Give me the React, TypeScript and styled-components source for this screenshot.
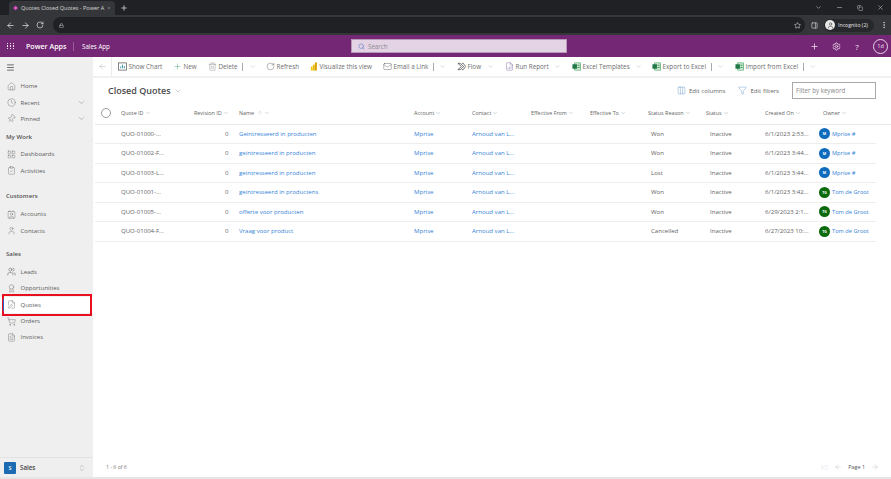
import React from "react";
import styled, { createGlobalStyle } from "styled-components";
import {
  ArrowLeft, ArrowRight, RotateCw, Lock, Star, PanelRight, MoreVertical, Plus, X, ChevronDown, Minus, Copy,
  Settings, Menu, Home, Clock, Pin, LayoutGrid, ClipboardCheck, Contact, User, Users, Award, FilePen,
  ShoppingCart, FileText, Search, Trash2, Mail, FileBarChart, Columns3, Filter,
  ChevronsUpDown, ArrowUp, SkipBack,
} from "lucide-react";

const Global = createGlobalStyle`
  html, body { margin: 0; padding: 0; background: #fff; }
  #root { width: 891px; height: 479px; overflow: hidden; }
  * { box-sizing: border-box; }
`;

const Page = styled.div`
  width: 891px; height: 479px; display: flex; flex-direction: column;
  font-family: "Open Sans", "Noto Sans", sans-serif; font-size: 6.2px; color: #555;
  border-bottom: 2px solid #e6e6e6; overflow: hidden;
`;
const TabStrip = styled.div`
  height: 15px; background: #202124; display: flex; align-items: flex-end; color: #ddd; padding-left: 9px;
`;
const Tab = styled.div`
  width: 106px; height: 14px; background: #35363a; border-radius: 4px 4px 0 0; display: flex; align-items: center;
  padding: 0 4px; gap: 3px; color: #d8d8d8; font-size: 5.5px; white-space: nowrap;
`;
const TabTitle = styled.span`flex: 1;`;
const NewTab = styled.div`margin-left: 5px; height: 14px; display: flex; align-items: center; color: #eee;`;
const WindowControls = styled.div`
  margin-left: auto; height: 15px; display: flex; align-items: center; gap: 14px; padding-right: 7px; color: #bbb;
`;
const AddressRow = styled.div`
  height: 20px; background: #35363a; display: flex; align-items: center; padding-left: 6px; color: #e2e2e2; gap: 6px;
`;
const Omnibox = styled.div`
  margin-left: 3px; width: 752px; height: 16px; border-radius: 8px; background: #202124; display: flex; align-items: center;
  justify-content: space-between; padding: 0 4px 0 6px; color: #ddd;
`;
const Incognito = styled.div`
  width: 50px; height: 13px; border-radius: 7px; background: #27282b; display: flex; align-items: center;
  gap: 3px; padding-left: 1px; color: #e6e6e6; font-size: 5.2px; white-space: nowrap;
`;
const IncognitoIcon = styled.div`
  width: 10px; height: 10px; border-radius: 50%; background: #e8e8e8; color: #444; display: flex; align-items: center; justify-content: center;
`;
const TopBar = styled.div`
  height: 22px; background: #742774; display: flex; align-items: center; color: #fff;
`;
const Waffle = styled.div`
  width: 8px; margin-left: 7px; display: grid; grid-template-columns: repeat(3, 2px); gap: 1px;
  & > i { width: 1.4px; height: 1.4px; background: #f3e6f3; display: block; }
`;
const Brand = styled.div`margin-left: 11px; font-size: 7.1px; font-weight: 600; width: 47px; white-space: nowrap;`;
const AppName = styled.div`
  border-left: 1px solid #97609a; padding-left: 8px; font-size: 6.2px; height: 9px; line-height: 9px; width: 278px; white-space: nowrap;
`;
const SearchBox = styled.div`
  width: 216px; height: 14px; background: #e4d3e4; display: flex; align-items: center; gap: 3px; padding-left: 6px;
  color: #8b8b8f; font-size: 6.2px; border: 1px solid #b79ab8;
`;
const TopIcons = styled.div`margin-left: auto; display: flex; align-items: center; gap: 13px; padding-right: 3px; color: #f3e6f3;`;
const Help = styled.span`width: 6px; text-align: center; font-size: 8px;`;
const UserCircle = styled.div`
  width: 15px; height: 15px; border-radius: 50%; border: 1px solid #e8d6e8; font-size: 5.5px; display: flex; align-items: center; justify-content: center;
`;
const Body = styled.div`flex: 1; min-height: 0; display: flex;`;
const Sidebar = styled.nav`
  width: 93px; background: #efefef; display: flex; flex-direction: column; color: #555;
`;
const Burger = styled.div`height: 21px; padding-left: 6px; display: flex; align-items: center; color: #444;`;
const NavHead = styled.div`
  height: 16px; margin: ${p => p.$top}px 0 2px; padding-left: 6px; font-size: 6.1px; font-weight: 600; color: #555; display: flex; align-items: center;
`;
const NavItem = styled.div`
  height: 16.4px; display: flex; align-items: center; padding-left: 6.5px; gap: 5px; position: relative;
  background: ${p => (p.$active ? "#fff" : "transparent")}; color: #5c5c5c; font-size: 6px;
  ${p => p.$active && `
    &::before { content: ""; position: absolute; left: 2.5px; top: 2px; bottom: 2px; width: 1.5px; background: #2f5fd0; z-index: 2; }
    &::after { content: ""; position: absolute; left: 2px; right: 1.5px; top: -3px; bottom: -3px; border: 2px solid #e8101f; }
  `}
`;
const NavLabel = styled.span`flex: 1; white-space: nowrap;`;
const NavChevron = styled.span`display: flex; padding-right: 7px; color: #666;`;
const TiltedPin = styled(Pin)`transform: rotate(40deg);`;
const Switcher = styled.div`
  margin-top: auto; height: 20px; border-top: 1px solid #e2e2e2; display: flex; align-items: center; padding: 0 7px 0 4px; gap: 4px;
  font-size: 6.2px; color: #444; font-weight: 600;
`;
const SwitchBadge = styled.div`
  width: 12px; height: 12px; background: #1b6ab2; color: #fff; font-size: 5.5px; display: flex; align-items: center; justify-content: center; border-radius: 1px;
`;
const Main = styled.main`flex: 1; min-width: 0; display: flex; flex-direction: column;`;
const CommandBar = styled.div`
  height: 21px; display: flex; align-items: center; border-bottom: 2px solid #f1f1f1; color: #6e6e6e; font-size: 6.3px; white-space: nowrap;
`;
const BackCell = styled.div`
  width: 19px; height: 19px; display: flex; align-items: center; padding-left: 5px; border-right: 1px solid #eaeaea; margin-right: 6px; color: #999;
`;
const Cmd = styled.div`width: ${p => p.$w}px; display: flex; align-items: center; gap: 1.5px; flex: none;`;
const Bar = styled.span`width: 1px; height: 8px; background: #aaa; margin-left: 3px;`;
const Chev = styled(ChevronDown)`margin-left: 4px; color: #888;`;
const TitleRow = styled.div`height: 24.5px; display: flex; align-items: center; padding: 1px 15px 0 15px; flex: none;`;
const Title = styled.h1`
  margin: 0; font-size: 9px; font-weight: 600; color: #4a4a4a; display: flex; align-items: center; gap: 3px; white-space: nowrap;
`;
const TitleTools = styled.div`margin-left: auto; display: flex; align-items: center; color: #666; font-size: 6.1px;`;
const Tool = styled.div`display: flex; align-items: center; gap: 3px; margin-right: ${p => p.$mr}px; white-space: nowrap;`;
const FilterBox = styled.div`
  width: 84px; height: 17px; border: 1px solid #a8a8a8; padding-left: 3px; display: flex; align-items: center; color: #888; font-size: 6.2px;
`;
const Table = styled.div`padding: 0 15px 0 2px;`;
const cols = "26px 73px 45px 175px 58px 59px 59px 58px 58px 59px 58px 1fr";
const HeadRow = styled.div`
  display: grid; grid-template-columns: ${cols}; height: 22px; align-items: center; border-bottom: 1px solid #e8e8e8; margin-right: -15px;
  padding-right: 15px; color: #5f5f5f; font-size: 5.4px; white-space: nowrap;
`;
const HeadCell = styled.div`display: flex; align-items: center; gap: 1px;`;
const RadioCell = styled.div`padding-left: 6px;`;
const Radio = styled.div`width: 10px; height: 10px; border-radius: 50%; border: 1px solid #9a9a9a;`;
const Row = styled.div`
  display: grid; grid-template-columns: ${cols}; height: 19.5px; align-items: center; border-bottom: 1px solid #eeeeee; white-space: nowrap; color: #5f5f5f; font-size: 6.05px;
`;
const Cell = styled.div`
  padding-left: ${p => p.$pl ?? 0}px; text-align: ${p => p.$right ? "right" : "left"}; padding-right: ${p => p.$right ? 10.5 : 0}px;
  color: ${p => p.$link ? "#3583d6" : "#5f5f5f"}; overflow: hidden;
`;
const OwnerCell = styled.div`display: flex; align-items: center; gap: 2px; margin-left: -4px; color: #3583d6; font-size: 5.7px;`;
const Avatar = styled.span`
  width: 11px; height: 11px; border-radius: 50%; background: ${p => p.$c}; color: #fff; font-size: 3.6px; font-weight: 700;
  display: flex; align-items: center; justify-content: center; flex: none;
`;
const Footer = styled.div`
  margin-top: auto; height: 20px; display: flex; align-items: center; padding: 0 12px 0 13px; color: #777; font-size: 5.2px;
`;
const Pager = styled.div`margin-left: auto; display: flex; align-items: center; gap: 6px; color: #aaa;`;
const PageText = styled.span`color: #555; font-size: 5.4px;`;

const ExcelIcon = () => (
  <svg width="9" height="9" viewBox="0 0 10 10">
    <rect x="3" y="1" width="6.5" height="8" fill="#d8ecd9" stroke="#3c9c5c" strokeWidth=".7" />
    <rect x="0.5" y="2.5" width="5" height="5" fill="#1f7a45" />
    <rect x="6" y="3" width="2.5" height="1.2" fill="#3a9a60" />
    <rect x="6" y="5.5" width="2.5" height="1.2" fill="#3a9a60" />
  </svg>
);
const PowerBi = () => (
  <svg width="8" height="9" viewBox="0 0 8 10">
    <rect x="0.5" y="5" width="2" height="4.5" fill="#f2c811" />
    <rect x="2.8" y="3" width="2" height="6.5" fill="#e8b60a" />
    <rect x="5" y="0.5" width="2.2" height="9" fill="#d9a300" />
  </svg>
);
const ChartIcon = () => (
  <svg width="9" height="9" viewBox="0 0 10 10" fill="none">
    <rect x="0.7" y="1" width="8.6" height="8" stroke="#555" strokeWidth=".8" />
    <path d="M3 7V5M5 7V3M7 7V4.5" stroke="#2f8f9c" strokeWidth="1" />
  </svg>
);
const FlowIcon = () => (
  <svg width="9" height="9" viewBox="0 0 10 10" fill="none" stroke="#444" strokeWidth=".8">
    <path d="M1 1.5 5 5 1 8.5H3.5L7.5 5 3.5 1.5Z" />
    <path d="M5.5 1.5H7L9.5 5 7 8.5H5.5" />
  </svg>
);
const Favicon = () => (
  <svg width="8" height="8" viewBox="0 0 10 10"><path d="M5 0 10 5 5 10 0 5Z" fill="#c43fb0" /><path d="M5 2.5 7.5 5 5 7.5Z" fill="#f0a3e0" /></svg>
);

const ic = { size: 9, strokeWidth: 1 };
const ch = { size: 7, strokeWidth: 1 };

const rows = [
  ["QUO-01000-...", "Geintresseerd in producten", "Won", "6/1/2023 2:53...", "M"],
  ["QUO-01002-F...", "geintresseerd in producten", "Won", "6/1/2023 3:44...", "M"],
  ["QUO-01003-L...", "geintresseerd in producten", "Lost", "6/1/2023 3:44...", "M"],
  ["QUO-01001-...", "geintresseerd in productens", "Won", "6/1/2023 3:42...", "T"],
  ["QUO-01005-...", "offerte voor producten", "Won", "6/29/2023 2:1...", "T"],
  ["QUO-01004-F...", "Vraag voor product", "Cancelled", "6/27/2023 10:...", "T"],
];
const heads = ["Quote ID", "Revision ID", "Name", "Account", "Contact", "Effective From", "Effective To", "Status Reason", "Status", "Created On", "Owner"];

export default function App() {
  return (
    <Page>
      <Global />
      <TabStrip>
        <Tab><Favicon /><TabTitle>Quotes Closed Quotes - Power A</TabTitle><X size={6} /></Tab>
        <NewTab><Plus size={8} /></NewTab>
        <WindowControls><ChevronDown size={7} /><Minus size={7} /><Copy size={6} /><X size={7} /></WindowControls>
      </TabStrip>
      <AddressRow>
        <ArrowLeft size={9} /><ArrowRight size={9} /><RotateCw size={8} />
        <Omnibox><Lock size={5} /><Star size={7} /></Omnibox>
        <PanelRight size={7} />
        <Incognito><IncognitoIcon><User size={7} /></IncognitoIcon>Incognito (2)</Incognito>
        <MoreVertical size={8} />
      </AddressRow>
      <TopBar>
        <Waffle>{Array.from({ length: 9 }, (_, i) => <i key={i} />)}</Waffle>
        <Brand>Power Apps</Brand>
        <AppName>Sales App</AppName>
        <SearchBox><Search size={7} color="#5b7fc4" />Search</SearchBox>
        <TopIcons>
          <Plus size={9} /><Settings size={9} />
          <Help>?</Help>
          <UserCircle>1d</UserCircle>
        </TopIcons>
      </TopBar>
      <Body>
        <Sidebar>
          <Burger><Menu size={9} /></Burger>
          <NavItem><Home {...ic} /><NavLabel>Home</NavLabel></NavItem>
          <NavItem><Clock {...ic} /><NavLabel>Recent</NavLabel><NavChevron><ChevronDown size={9} strokeWidth={1} /></NavChevron></NavItem>
          <NavItem><TiltedPin {...ic} /><NavLabel>Pinned</NavLabel><NavChevron><ChevronDown size={9} strokeWidth={1} /></NavChevron></NavItem>
          <NavHead $top={1}>My Work</NavHead>
          <NavItem><LayoutGrid {...ic} /><NavLabel>Dashboards</NavLabel></NavItem>
          <NavItem><ClipboardCheck {...ic} /><NavLabel>Activities</NavLabel></NavItem>
          <NavHead $top={9}>Customers</NavHead>
          <NavItem><Contact {...ic} /><NavLabel>Accounts</NavLabel></NavItem>
          <NavItem><User {...ic} /><NavLabel>Contacts</NavLabel></NavItem>
          <NavHead $top={7}>Sales</NavHead>
          <NavItem><Users {...ic} strokeWidth={1.4} /><NavLabel>Leads</NavLabel></NavItem>
          <NavItem><Award {...ic} /><NavLabel>Opportunities</NavLabel></NavItem>
          <NavItem $active><FilePen {...ic} /><NavLabel>Quotes</NavLabel></NavItem>
          <NavItem><ShoppingCart {...ic} /><NavLabel>Orders</NavLabel></NavItem>
          <NavItem><FileText {...ic} /><NavLabel>Invoices</NavLabel></NavItem>
          <Switcher><SwitchBadge>S</SwitchBadge><NavLabel>Sales</NavLabel><ChevronsUpDown size={8} strokeWidth={1} color="#777" /></Switcher>
        </Sidebar>
        <Main>
          <CommandBar>
            <BackCell><ArrowLeft {...ic} /></BackCell>
            <Cmd $w={55}><ChartIcon />Show Chart</Cmd>
            <Cmd $w={35}><Plus {...ic} color="#2d9a5a" />New</Cmd>
            <Cmd $w={58}><Trash2 {...ic} />Delete<Bar /><Chev {...ch} /></Cmd>
            <Cmd $w={44}><RotateCw {...ic} color="#444" />Refresh</Cmd>
            <Cmd $w={73}><PowerBi /> Visualize this view</Cmd>
            <Cmd $w={74}><Mail {...ic} color="#444" />Email a Link<Bar /><Chev {...ch} /></Cmd>
            <Cmd $w={48}><FlowIcon />Flow<Chev {...ch} /></Cmd>
            <Cmd $w={67}><FileBarChart {...ic} color="#6a4f8c" />Run Report<Chev {...ch} /></Cmd>
            <Cmd $w={80}><ExcelIcon />Excel Templates<Chev {...ch} /></Cmd>
            <Cmd $w={83}><ExcelIcon />Export to Excel<Bar /><Chev {...ch} /></Cmd>
            <Cmd $w={85}><ExcelIcon />Import from Excel<Bar /><Chev {...ch} /></Cmd>
          </CommandBar>
          <TitleRow>
            <Title>Closed Quotes <ChevronDown size={8} strokeWidth={1} color="#666" /></Title>
            <TitleTools>
              <Tool $mr={13}><Columns3 {...ic} color="#4a80c0" />Edit columns</Tool>
              <Tool $mr={13}><Filter {...ic} color="#4a80c0" />Edit filters</Tool>
              <FilterBox>Filter by keyword</FilterBox>
            </TitleTools>
          </TitleRow>
          <Table>
            <HeadRow>
              <RadioCell><Radio /></RadioCell>
              {heads.map(h => (
                <HeadCell key={h}>{h}{h === "Name" && <ArrowUp size={6} strokeWidth={1} color="#aaa" style={{ marginLeft: 2 }} />}<ChevronDown size={6} strokeWidth={1} /></HeadCell>
              ))}
            </HeadRow>
            {rows.map(r => (
              <Row key={r[0]}>
                <span />
                <Cell>{r[0]}</Cell>
                <Cell $right>0</Cell>
                <Cell $link>{r[1]}</Cell>
                <Cell $link>Mprise</Cell>
                <Cell $link>Arnoud van L...</Cell>
                <span /><span />
                <Cell $pl={3}>{r[2]}</Cell>
                <Cell $pl={4}>Inactive</Cell>
                <Cell>{r[3]}</Cell>
                <OwnerCell>
                  <Avatar $c={r[4] === "M" ? "#0f6cbd" : "#0b6a0b"}>{r[4] === "M" ? "M" : "TG"}</Avatar>
                  {r[4] === "M" ? "Mprise #" : "Tom de Groot"}
                </OwnerCell>
              </Row>
            ))}
          </Table>
          <Footer>
            1 - 6 of 6
            <Pager>
              <SkipBack size={7} strokeWidth={1} color="#bcd" />
              <ArrowLeft size={8} strokeWidth={1} />
              <PageText>Page 1</PageText>
              <ArrowRight size={8} strokeWidth={1} />
            </Pager>
          </Footer>
        </Main>
      </Body>
    </Page>
  );
}
